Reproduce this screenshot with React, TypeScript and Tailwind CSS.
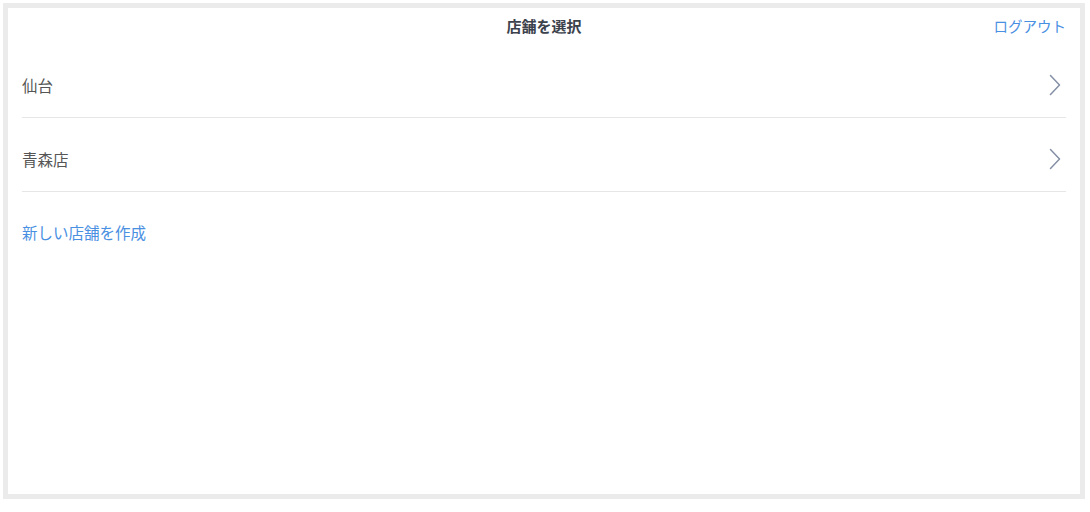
import React from "react";

const font = { fontFamily: '"Noto Sans CJK JP", "Noto Sans", sans-serif' };

function Chevron() {
  return (
    <svg width="12" height="22" viewBox="0 0 12 22" fill="none" className="mr-[5px]">
      <path d="M1.5 1.5 L10.5 11 L1.5 20.5" stroke="#8590a6" strokeWidth="1.5" strokeLinecap="round" strokeLinejoin="round" />
    </svg>
  );
}

function Row({ label }: { label: string }) {
  return (
    <div className="h-[74px] flex items-center justify-between border-b border-[#e6e6e6] pt-[8px]">
      <span className="text-[15.5px] leading-[20px] text-[#555555]">{label}</span>
      <Chevron />
    </div>
  );
}

export default function App() {
  return (
    <div className="w-[1090px] h-[512px] bg-white pt-[3px] pl-[3px]" style={font}>
      <div className="w-[1082px] h-[496px] border-[5px] border-[#ebebeb] bg-white">
        <div className="relative h-[36px] flex items-center justify-center">
          <span className="text-[15px] leading-[20px] font-bold text-[#3c424c]">店舗を選択</span>
          <span className="absolute right-[14px] top-[8px] text-[14.5px] leading-[20px] text-[#4a90e2]">ログアウト</span>
        </div>
        <div className="px-[14px]">
          <Row label="仙台" />
          <Row label="青森店" />
          <div className="mt-[30px] h-[20px] text-[15.5px] leading-[20px] text-[#4a90e2]">新しい店舗を作成</div>
        </div>
      </div>
    </div>
  );
}
